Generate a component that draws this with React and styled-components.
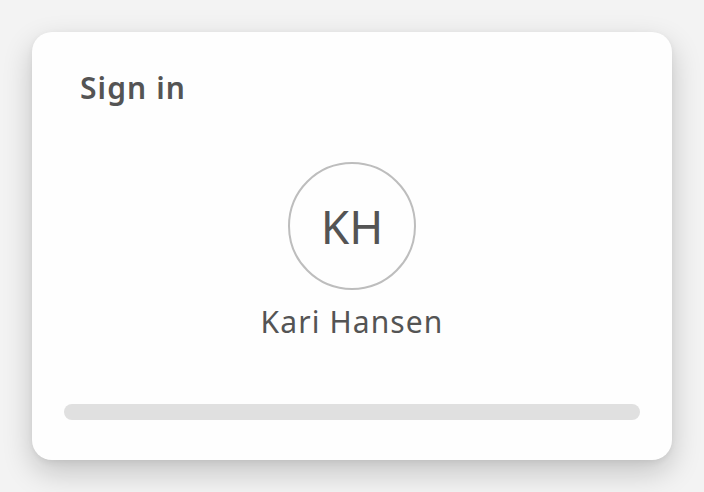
import React from 'react'
import styled, { createGlobalStyle } from 'styled-components'

const GlobalStyle = createGlobalStyle`
  html, body {
    margin: 0;
    padding: 0;
    background: #f3f3f3;
    font-family: "Noto Sans", "Open Sans", sans-serif;
  }
  * {
    box-sizing: border-box;
  }
`

const Page = styled.div`
  width: 704px;
  height: 492px;
  padding: 32px;
`

const Card = styled.div`
  width: 640px;
  height: 428px;
  background: #fefefe;
  border-radius: 20px;
  box-shadow: 0 12px 30px rgba(0, 0, 0, 0.2), 0 2px 6px rgba(0, 0, 0, 0.06);
  padding: 36px 32px 40px;
  display: flex;
  flex-direction: column;
`

const Title = styled.h1`
  margin: 0 0 0 16px;
  font-size: 30px;
  font-weight: 600;
  line-height: 40px;
  letter-spacing: 1.1px;
  color: #545454;
`

const Profile = styled.div`
  flex: 1;
  display: flex;
  flex-direction: column;
  align-items: center;
  padding-top: 54px;
`

const Avatar = styled.div`
  width: 128px;
  height: 128px;
  border-radius: 50%;
  border: 2px solid #bdbdbd;
  display: flex;
  align-items: center;
  justify-content: center;
  font-size: 46px;
  color: #545454;
`

const Name = styled.div`
  margin-top: 12px;
  font-size: 30px;
  line-height: 40px;
  letter-spacing: 1.1px;
  color: #545454;
`

const Progress = styled.div`
  height: 16px;
  border-radius: 8px;
  background: #e0e0e0;
`

export default function App() {
  return (
    <>
      <GlobalStyle />
      <Page>
        <Card>
          <Title>Sign in</Title>
          <Profile>
            <Avatar>KH</Avatar>
            <Name>Kari Hansen</Name>
          </Profile>
          <Progress />
        </Card>
      </Page>
    </>
  )
}
